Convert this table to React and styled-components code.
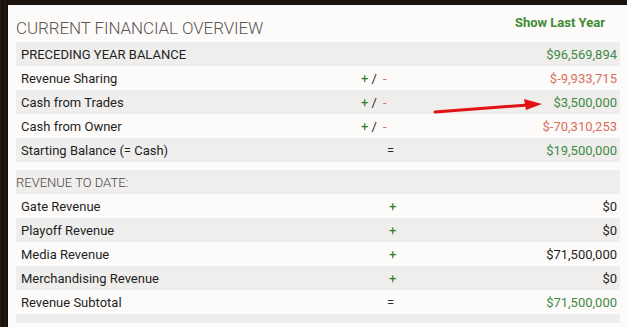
import React from "react";
import styled, { createGlobalStyle } from "styled-components";

const Global = createGlobalStyle`
  html, body { margin: 0; padding: 0; }
  body {
    width: 627px;
    height: 327px;
    overflow: hidden;
    background: #1b130d;
    font-family: Roboto, "Noto Sans", "Liberation Sans", sans-serif;
  }
`;

const Backdrop = styled.div`
  width: 627px;
  height: 327px;
  box-sizing: border-box;
  padding: 5px 0 0 8px;
  background:
    linear-gradient(90deg, #2a1d14 0px, #120c08 3px, #2b1e15 5px, #0f0a07 8px),
    #1b130d;
  background-size: 8px 100%;
  background-repeat: no-repeat;
`;

const Panel = styled.div`
  position: relative;
  height: 100%;
  box-sizing: border-box;
  background: #fdfbf9;
  padding: 0 7px 0 8px;
  display: flex;
  flex-direction: column;
`;

const Header = styled.div`
  height: 37px;
  display: flex;
  justify-content: space-between;
  align-items: flex-start;
`;

const Title = styled.h1`
  margin: 0;
  padding-top: 13px;
  font-family: Roboto, "Liberation Sans", sans-serif;
  font-weight: 300;
  font-size: 17px;
  line-height: 20px;
  color: #5a5652;
  letter-spacing: -0.1px;
`;

const ShowLink = styled.a`
  padding-top: 10px;
  padding-right: 15px;
  font-weight: 700;
  font-size: 13px;
  line-height: 16px;
  color: #3f8b34;
  cursor: pointer;
`;

const Row = styled.div`
  display: grid;
  grid-template-columns: 344px 60px 1fr;
  align-items: center;
  height: ${(p) => p.$h || 24}px;
  background: ${(p) => (p.$alt ? "#efeeec" : "#fdfbf9")};
  font-size: 13px;
  color: #1f1f1f;
`;

const Label = styled.div`
  padding-left: ${(p) => (p.$section ? 0 : 5)}px;
  color: ${(p) => (p.$section ? "#4a4643" : "#1f1f1f")};
  font-weight: ${(p) => (p.$section ? 300 : 400)};
  white-space: nowrap;
`;

const Op = styled.div`
  padding-left: ${(p) => p.$offset || 0}px;
  white-space: nowrap;
  color: #2a2a2a;
`;

const Plus = styled.span`
  color: #2f7a2a;
`;
const Minus = styled.span`
  color: #d9705f;
`;
const Slash = styled.span`
  color: #2a2a2a;
  margin: 0 3px 0 3px;
`;

const Value = styled.div`
  text-align: right;
  padding-right: 3px;
  color: ${(p) =>
    p.$tone === "green" ? "#3f8a46" : p.$tone === "red" ? "#d6705e" : "#1f1f1f"};
`;

const Arrow = styled.svg`
  position: absolute;
  left: 410px;
  top: 86px;
  pointer-events: none;
`;

const PlusMinus = () => (
  <Op $offset={1}>
    <Plus>+</Plus>
    <Slash>/</Slash>
    {"  "}
    <Minus>-</Minus>
  </Op>
);

const top = [
  { label: "PRECEDING YEAR BALANCE", op: null, value: "$96,569,894", tone: "green" },
  { label: "Revenue Sharing", op: "pm", value: "$-9,933,715", tone: "red" },
  { label: "Cash from Trades", op: "pm", value: "$3,500,000", tone: "green" },
  { label: "Cash from Owner", op: "pm", value: "$-70,310,253", tone: "red" },
  { label: "Starting Balance (= Cash)", op: "eq", value: "$19,500,000", tone: "green" },
];

const revenue = [
  { label: "Gate Revenue", op: "plus", value: "$0" },
  { label: "Playoff Revenue", op: "plus", value: "$0" },
  { label: "Media Revenue", op: "plus", value: "$71,500,000" },
  { label: "Merchandising Revenue", op: "plus", value: "$0" },
  { label: "Revenue Subtotal", op: "eq", value: "$71,500,000", tone: "green" },
];

const renderOp = (op) => {
  if (op === "pm") return <PlusMinus />;
  if (op === "eq") return <Op $offset={27}>=</Op>;
  if (op === "plus")
    return (
      <Op $offset={29}>
        <Plus>+</Plus>
      </Op>
    );
  return <Op />;
};

export default function App() {
  return (
    <>
      <Global />
      <Backdrop>
        <Panel>
          <Header>
            <Title>CURRENT FINANCIAL OVERVIEW</Title>
            <ShowLink>Show Last Year</ShowLink>
          </Header>
          {top.map((r, i) => (
            <Row key={r.label} $alt={i % 2 === 0}>
              <Label>{r.label}</Label>
              {renderOp(r.op)}
              <Value $tone={r.tone}>{r.value}</Value>
            </Row>
          ))}
          <Row $h={8} />
          <Row $alt>
            <Label $section>REVENUE TO DATE:</Label>
            <Op />
            <Value />
          </Row>
          {revenue.map((r, i) => (
            <Row key={r.label} $alt={i % 2 === 1}>
              <Label>{r.label}</Label>
              {renderOp(r.op)}
              <Value $tone={r.tone}>{r.value}</Value>
            </Row>
          ))}
          <Row $h={9} $alt />
          <Arrow width="135" height="30" viewBox="0 0 135 30">
            <path d="M17 21 L110 14" stroke="#e01212" strokeWidth="3" strokeLinecap="round" fill="none" />
            <path d="M106 8 L124 13 L108 19 Z" fill="#e01212" />
          </Arrow>
        </Panel>
      </Backdrop>
    </>
  );
}
